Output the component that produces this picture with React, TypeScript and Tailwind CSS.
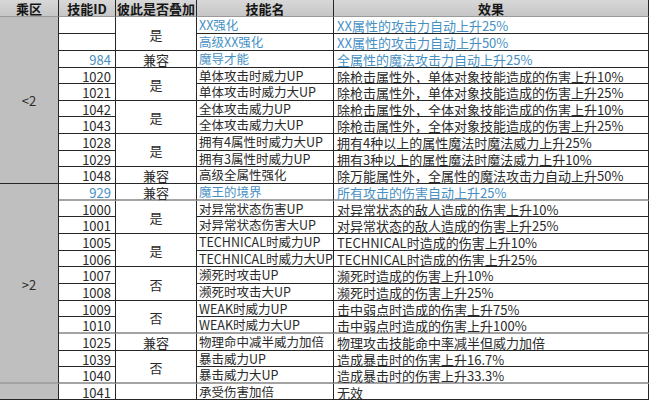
import React from 'react';

type Row = { id: string; name: string; eff: string; blue?: boolean };

const rows: Row[] = [
  { id: '', name: 'XX强化', eff: 'XX属性的攻击力自动上升25%', blue: true },
  { id: '', name: '高级XX强化', eff: 'XX属性的攻击力自动上升50%', blue: true },
  { id: '984', name: '魔导才能', eff: '全属性的魔法攻击力自动上升25%', blue: true },
  { id: '1020', name: '单体攻击时威力UP', eff: '除枪击属性外，单体对象技能造成的伤害上升10%' },
  { id: '1021', name: '单体攻击时威力大UP', eff: '除枪击属性外，单体对象技能造成的伤害上升25%' },
  { id: '1042', name: '全体攻击威力UP', eff: '除枪击属性外，全体对象技能造成的伤害上升10%' },
  { id: '1043', name: '全体攻击威力大UP', eff: '除枪击属性外，全体对象技能造成的伤害上升25%' },
  { id: '1028', name: '拥有4属性时威力大UP', eff: '拥有4种以上的属性魔法时魔法威力上升25%' },
  { id: '1029', name: '拥有3属性时威力UP', eff: '拥有3种以上的属性魔法时魔法威力上升10%' },
  { id: '1048', name: '高级全属性强化', eff: '除万能属性外，全属性的魔法攻击力自动上升50%' },
  { id: '929', name: '魔王的境界', eff: '所有攻击的伤害自动上升25%', blue: true },
  { id: '1000', name: '对异常状态伤害UP', eff: '对异常状态的敌人造成的伤害上升10%' },
  { id: '1001', name: '对异常状态伤害大UP', eff: '对异常状态的敌人造成的伤害上升25%' },
  { id: '1005', name: 'TECHNICAL时威力UP', eff: 'TECHNICAL时造成的伤害上升10%' },
  { id: '1006', name: 'TECHNICAL时威力大UP', eff: 'TECHNICAL时造成的伤害上升25%' },
  { id: '1007', name: '濒死时攻击UP', eff: '濒死时造成的伤害上升10%' },
  { id: '1008', name: '濒死时攻击大UP', eff: '濒死时造成的伤害上升25%' },
  { id: '1009', name: 'WEAK时威力UP', eff: '击中弱点时造成的伤害上升75%' },
  { id: '1010', name: 'WEAK时威力大UP', eff: '击中弱点时造成的伤害上升100%' },
  { id: '1025', name: '物理命中减半威力加倍', eff: '物理攻击技能命中率减半但威力加倍' },
  { id: '1039', name: '暴击威力UP', eff: '造成暴击时的伤害上升16.7%' },
  { id: '1040', name: '暴击威力大UP', eff: '造成暴击时的伤害上升33.3%' },
  { id: '1041', name: '承受伤害加倍', eff: '无效' },
];

// 彼此是否叠加 merged cells
const stack = [
  { t: '是', n: 2 }, { t: '兼容', n: 1 }, { t: '是', n: 2 }, { t: '是', n: 2 },
  { t: '是', n: 2 }, { t: '兼容', n: 1 }, { t: '兼容', n: 1 }, { t: '是', n: 2 },
  { t: '是', n: 2 }, { t: '否', n: 2 }, { t: '否', n: 2 }, { t: '兼容', n: 1 },
  { t: '否', n: 2 }, { t: '', n: 1 },
];

// rows whose bottom line is the soft gray one
const grayBottom = [10, 18, 21];

const starts: Record<number, { t: string; n: number }> = {};
let acc = 0;
for (const s of stack) {
  starts[acc] = s;
  acc += s.n;
}

const base = 'border-r border-r-[#262626] flex items-center whitespace-nowrap pt-[1px]';
const line = (gray: boolean) => (gray ? 'border-b-2 border-b-[#a3a3a3]' : 'border-b border-b-[#262626]');

export default function App() {
  return (
    <div className="w-[650px] h-[400px] bg-white overflow-hidden font-['Noto_Sans_CJK_SC',sans-serif] text-[13px] leading-none text-[#2a2a2a]">
      <div className="grid w-[649px] grid-cols-[59px_57px_81px_137px_315px] grid-rows-[17px_17px_17px_17px_16px_17px_16px_17px_17px_16px_17px_17px_16px_17px_17px_16px_17px_17px_16px_17px_17px_16px_17px_16px]">
        {['乘区', '技能ID', '彼此是否叠加', '技能名', '效果'].map((h) => (
          <div
            key={h}
            className="border-r border-r-[#262626] border-b border-b-[#9a9a9a] bg-gradient-to-b from-[#d8d8d8] to-[#c6c6c6] flex items-center justify-center font-bold text-[#151515]"
          >
            {h}
          </div>
        ))}

        {rows.map((r, i) => {
          const gray = grayBottom.includes(i);
          const grp = starts[i];
          const lastOfGrp = grp ? grayBottom.includes(i + grp.n - 1) : false;
          const color = r.blue ? 'text-[#4690c4]' : '';
          return (
            <React.Fragment key={i}>
              {i === 0 && (
                <div className={`${base} border-b border-b-[#262626] row-span-10 bg-[#bfbfbf] justify-center`}>&lt;2</div>
              )}
              {i === 10 && (
                <div className={`${base} border-b-2 border-b-[#a3a3a3] row-span-12 bg-[#bfbfbf] justify-center pt-[3px]`}>&gt;2</div>
              )}
              {i === 22 && <div className={`${base} border-b border-b-[#262626] bg-[#bfbfbf]`} />}

              <div className={`${base} ${line(gray)} justify-end pr-[4px] ${color}`}>{r.id}</div>

              {grp && (
                <div className={`${base} ${line(lastOfGrp)} justify-center ${grp.n === 2 ? 'row-span-2' : ''}`}>
                  {grp.t}
                </div>
              )}

              <div className={`${base} ${line(gray)} pl-[2px] text-[12.5px] ${color}`}>{r.name}</div>
              <div className={`${base} ${line(gray)} pl-[3px] ${color}`}>{r.eff}</div>
            </React.Fragment>
          );
        })}
      </div>
    </div>
  );
}
